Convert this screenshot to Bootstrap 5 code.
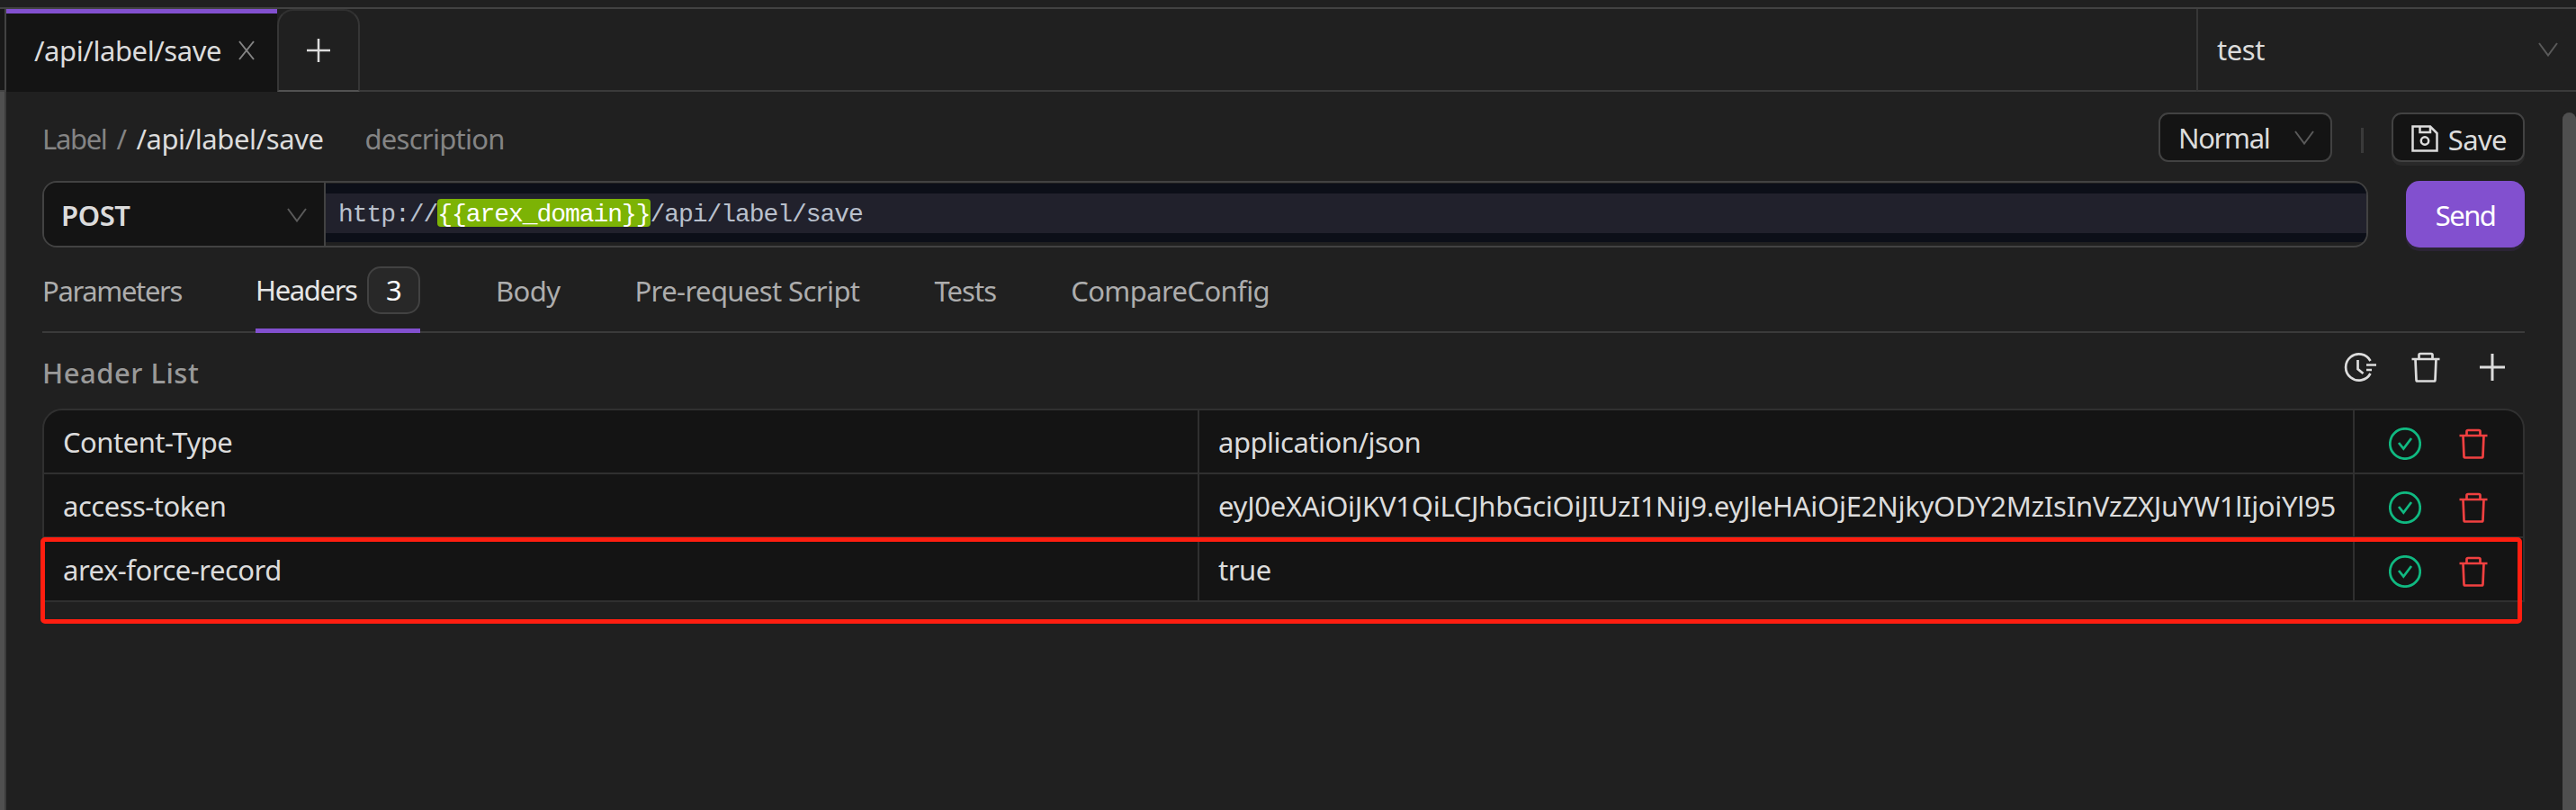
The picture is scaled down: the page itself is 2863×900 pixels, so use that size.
<!DOCTYPE html>
<html lang="en" data-bs-theme="dark">
<head>
<meta charset="utf-8">
<title>/api/label/save</title>
<link href="https://cdn.jsdelivr.net/npm/bootstrap@5.3.0/dist/css/bootstrap.min.css" rel="stylesheet">
<script src="https://cdn.jsdelivr.net/npm/bootstrap@5.3.0/dist/js/bootstrap.bundle.min.js"></script>
<style>
  body { background:#202020; color:#dcdcdc; font:31px/42px "Noto Sans","Open Sans",sans-serif; height:900px; letter-spacing:-.6px; white-space:nowrap; }
  svg { display:block; flex:none; fill:none; stroke:currentColor; }
  .ls-path { letter-spacing:-.42px; }
  .ls-tight { letter-spacing:-1.35px; }
  .ls-snug { letter-spacing:-.95px; }
  .top-strip { height:10px; border-bottom:2px solid #424242; }
  .tab-bar { height:92px; }
  .tab-edge { width:7px; background:#181818; border-right:2px solid #424242; border-bottom:2px solid #424242; }
  .req-tab { width:301px; background:#141414; border-top:5px solid #8250cf; padding:0 24px 6px 31px; }
  .add-tab { width:92px; border:2px solid #363636; border-bottom-color:#525252; border-top-color:#303030; border-radius:18px 18px 0 0; }
  .bar-fill { border-bottom:2px solid #3a3a3a; }
  .env-pick { width:422px; border-left:2px solid #363636; border-bottom:2px solid #3a3a3a; padding:0 20px 0 21px; letter-spacing:-.4px; }
  .faint { color:#5a5a5a; }
  .muted { color:#848484; }
  .left-rail { width:7px; background:#505050; border-right:2px solid #3c3c3c; }
  .right-rail { width:15px; background:#4f4f4f; margin-top:23px; border-radius:8px 8px 0 0; }
  .pane { padding:23px 42px 0 40px; }
  .head-row { height:55px; }
  .crumb { padding-top:3px; }
  .crumb .slash { margin:0 11px 0 11px; }
  .crumb .desc { margin-left:46px; letter-spacing:-.75px; }
  .box { background:#141414; border:2px solid #424242; border-radius:11px; height:55px; }
  .box-normal { width:193px; padding:0 18px 0 20px; }
  .box-save { width:148px; padding:0 18px 0 20px; box-shadow:0 4px 0 #292929; }
  .box-save svg { margin-top:3px; }
  .sep { width:3px; height:28px; background:#3a3a3a; margin:6px 31px 0 32px; }
  .url-row { height:74px; margin-top:21px; }
  .url-box { width:2585px; border:2px solid #424242; border-radius:16px; }
  .method { width:313px; background:#141414; padding:2px 19px 0 19px; border-right:2px solid #424242; font-weight:600; letter-spacing:-.4px; }
  .url-outer { background:#0c0f18; margin:1px 0 4px; padding:11px 0 10px; }
  .url-line { background:#21212c; height:44px; padding:0 0 1px 14px; color:#b9c0cc; font:28px/36px "Liberation Mono",monospace; letter-spacing:-1.05px; }
  .url-var { background:#7cb305; color:#fff; border-radius:4px; height:31px; line-height:36px; }
  .send { width:132px; background:#8250cf; border:0; border-radius:15px; color:#fff; box-shadow:0 4px 0 #2b2435; padding-top:2px; letter-spacing:-1.5px; }
  .req-tabs { height:95px; border-bottom:2px solid #3a3a3a; color:#adadad; }
  .req-tabs > div { height:95px; margin-right:83px; }
  .req-tabs .on { color:#e6e6e6; border-bottom:5px solid #8250cf; padding-top:4px; width:183px; margin-left:-1px; margin-right:84px; }
  .count { width:59px; height:53px; background:#282828; border:2px solid #424242; border-radius:15px; color:#fff; }
  .list-head { height:84px; padding:0 22px 8px 0; }
  .list-title { color:#999; font-weight:500; letter-spacing:.5px; padding-top:11px; }
  .icon-trash { margin:0 44px 0 39px; }
  .kv { border:2px solid #303030; border-radius:22px 22px 0 0; background:#141414; }
  .kv-row { height:71px; border-bottom:2px solid #303030; }
  .kv-row:last-of-type { height:69px; border-bottom:0; }
  .kv-row > div { padding:0 20px 0 21px; }
  .kv-row > div + div { border-left:2px solid #303030; }
  .kv-key, .kv-val { flex:1 1 0; min-width:0; line-height:71px; letter-spacing:-.5px; }
  .kv-row > .kv-val { flex-basis:2px; }
  .token { letter-spacing:-.27px; }
  .kv-row > .kv-act { width:189px; padding:4px 39px 0 38px; }
  .kv .ok { color:#10b981; } .kv .del { color:#f04040; }
  .hilite { left:-4px; top:141px; width:2758px; height:96px; border:5px solid #ff1e10; border-radius:5px; }
</style>
</head>
<body class="d-flex flex-column overflow-hidden">
<svg width="0" height="0" class="position-absolute">
  <symbol id="chev" viewBox="0 0 22 16"><path d="M1 1 11 14.500 21 1" stroke-width="2"/></symbol>
  <symbol id="trash" viewBox="0 0 32 34"><path d="M.5 8h31M8.500 8V3.500q0-1.500 1.500-1.500h12q1.500 0 1.500 1.500V8M4.500 8l1 23q0 1.500 1.500 1.500h18q1.500 0 1.500-1.500l1-23" stroke-width="2.700"/></symbol>
  <symbol id="okc" viewBox="0 0 36 36"><circle cx="18" cy="18" r="16.700" stroke-width="2.700"/><path d="M11 17l5.300 6.500L25 12" stroke-width="2.700"/></symbol>
</svg>
<div class="top-strip flex-shrink-0"></div>
<div class="tab-bar d-flex flex-shrink-0">
  <div class="tab-edge"></div>
  <div class="req-tab d-flex align-items-center justify-content-between"><span class="ls-path">/api/label/save</span>
    <svg class="muted" width="20" height="22"><path d="M2 1 18 21M18 1 2 21" stroke-width="2"/></svg></div>
  <div class="add-tab d-flex align-items-center justify-content-center"><svg width="26" height="26"><path d="M0 13H26M13 0V26" stroke-width="2.500"/></svg></div>
  <div class="bar-fill flex-grow-1"></div>
  <div class="env-pick d-flex align-items-center justify-content-between"><span>test</span><svg class="faint" width="22" height="16"><use href="#chev"/></svg></div>
</div>
<div class="d-flex flex-grow-1">
  <div class="left-rail flex-shrink-0"></div>
  <div class="pane flex-grow-1">
    <div class="head-row d-flex align-items-center">
      <div class="crumb d-flex"><span class="muted ls-tight">Label</span><span class="muted slash">/</span><span class="ls-path">/api/label/save</span><span class="muted desc">description</span></div>
      <div class="box box-normal ms-auto d-flex align-items-center justify-content-between"><span class="ls-tight">Normal</span><svg class="faint" width="22" height="16"><use href="#chev"/></svg></div>
      <div class="sep"></div>
      <div class="box box-save d-flex align-items-center justify-content-between">
        <svg width="30" height="30"><path d="M1.500 1.500H21L28.500 9V28.500H1.500zM9.500 1.500V8H21V1.500" stroke-width="2.500"/><circle cx="15" cy="17.500" r="4.200" stroke-width="2.500"/></svg><span class="pt-1">Save</span></div>
    </div>
    <div class="url-row d-flex justify-content-between">
      <div class="url-box d-flex overflow-hidden">
        <div class="method d-flex align-items-center justify-content-between"><span>POST</span><svg class="faint" width="22" height="16"><use href="#chev"/></svg></div>
        <div class="url-outer flex-grow-1"><div class="url-line d-flex align-items-center"><span class="pt-1">http://</span><span class="url-var">{{arex_domain}}</span><span class="pt-1">/api/label/save</span></div></div>
      </div>
      <button class="send">Send</button>
    </div>
    <div class="req-tabs d-flex">
      <div class="d-flex align-items-center"><span class="ls-tight">Parameters</span></div>
      <div class="on d-flex align-items-center justify-content-between"><span class="ls-tight">Headers</span><span class="count d-flex align-items-center justify-content-center">3</span></div>
      <div class="d-flex align-items-center"><span>Body</span></div>
      <div class="d-flex align-items-center"><span>Pre-request Script</span></div>
      <div class="d-flex align-items-center"><span class="ls-snug">Tests</span></div>
      <div class="d-flex align-items-center"><span>CompareConfig</span></div>
    </div>
    <div class="list-head d-flex align-items-center justify-content-between">
      <span class="list-title">Header List</span>
      <div class="d-flex align-items-center">
        <svg width="36" height="32"><path d="M29.500 9A14.600 14.600 0 1 0 29.500 23M15.500 8v10l6 5M25 13.500h11M25 19h6" stroke-width="2.700"/></svg>
        <svg class="icon-trash" width="32" height="34"><use href="#trash"/></svg>
        <svg width="28" height="30"><path d="M0 15H28M14 0V30" stroke-width="3"/></svg>
      </div>
    </div>
    <div class="kv position-relative">
      <div class="kv-row d-flex"><div class="kv-key">Content-Type</div><div class="kv-val">application/json</div>
        <div class="kv-act d-flex align-items-center justify-content-between"><svg class="ok" width="36" height="36"><use href="#okc"/></svg><svg class="del" width="32" height="34"><use href="#trash"/></svg></div></div>
      <div class="kv-row d-flex"><div class="kv-key">access-token</div><div class="kv-val token">eyJ0eXAiOiJKV1QiLCJhbGciOiJIUzI1NiJ9.eyJleHAiOjE2NjkyODY2MzIsInVzZXJuYW1lIjoiYl95</div>
        <div class="kv-act d-flex align-items-center justify-content-between"><svg class="ok" width="36" height="36"><use href="#okc"/></svg><svg class="del" width="32" height="34"><use href="#trash"/></svg></div></div>
      <div class="kv-row d-flex"><div class="kv-key">arex-force-record</div><div class="kv-val">true</div>
        <div class="kv-act d-flex align-items-center justify-content-between"><svg class="ok" width="36" height="36"><use href="#okc"/></svg><svg class="del" width="32" height="34"><use href="#trash"/></svg></div></div>
      <section class="hilite position-absolute"></section>
    </div>
  </div>
  <div class="right-rail flex-shrink-0"></div>
</div>
</body>
</html>
